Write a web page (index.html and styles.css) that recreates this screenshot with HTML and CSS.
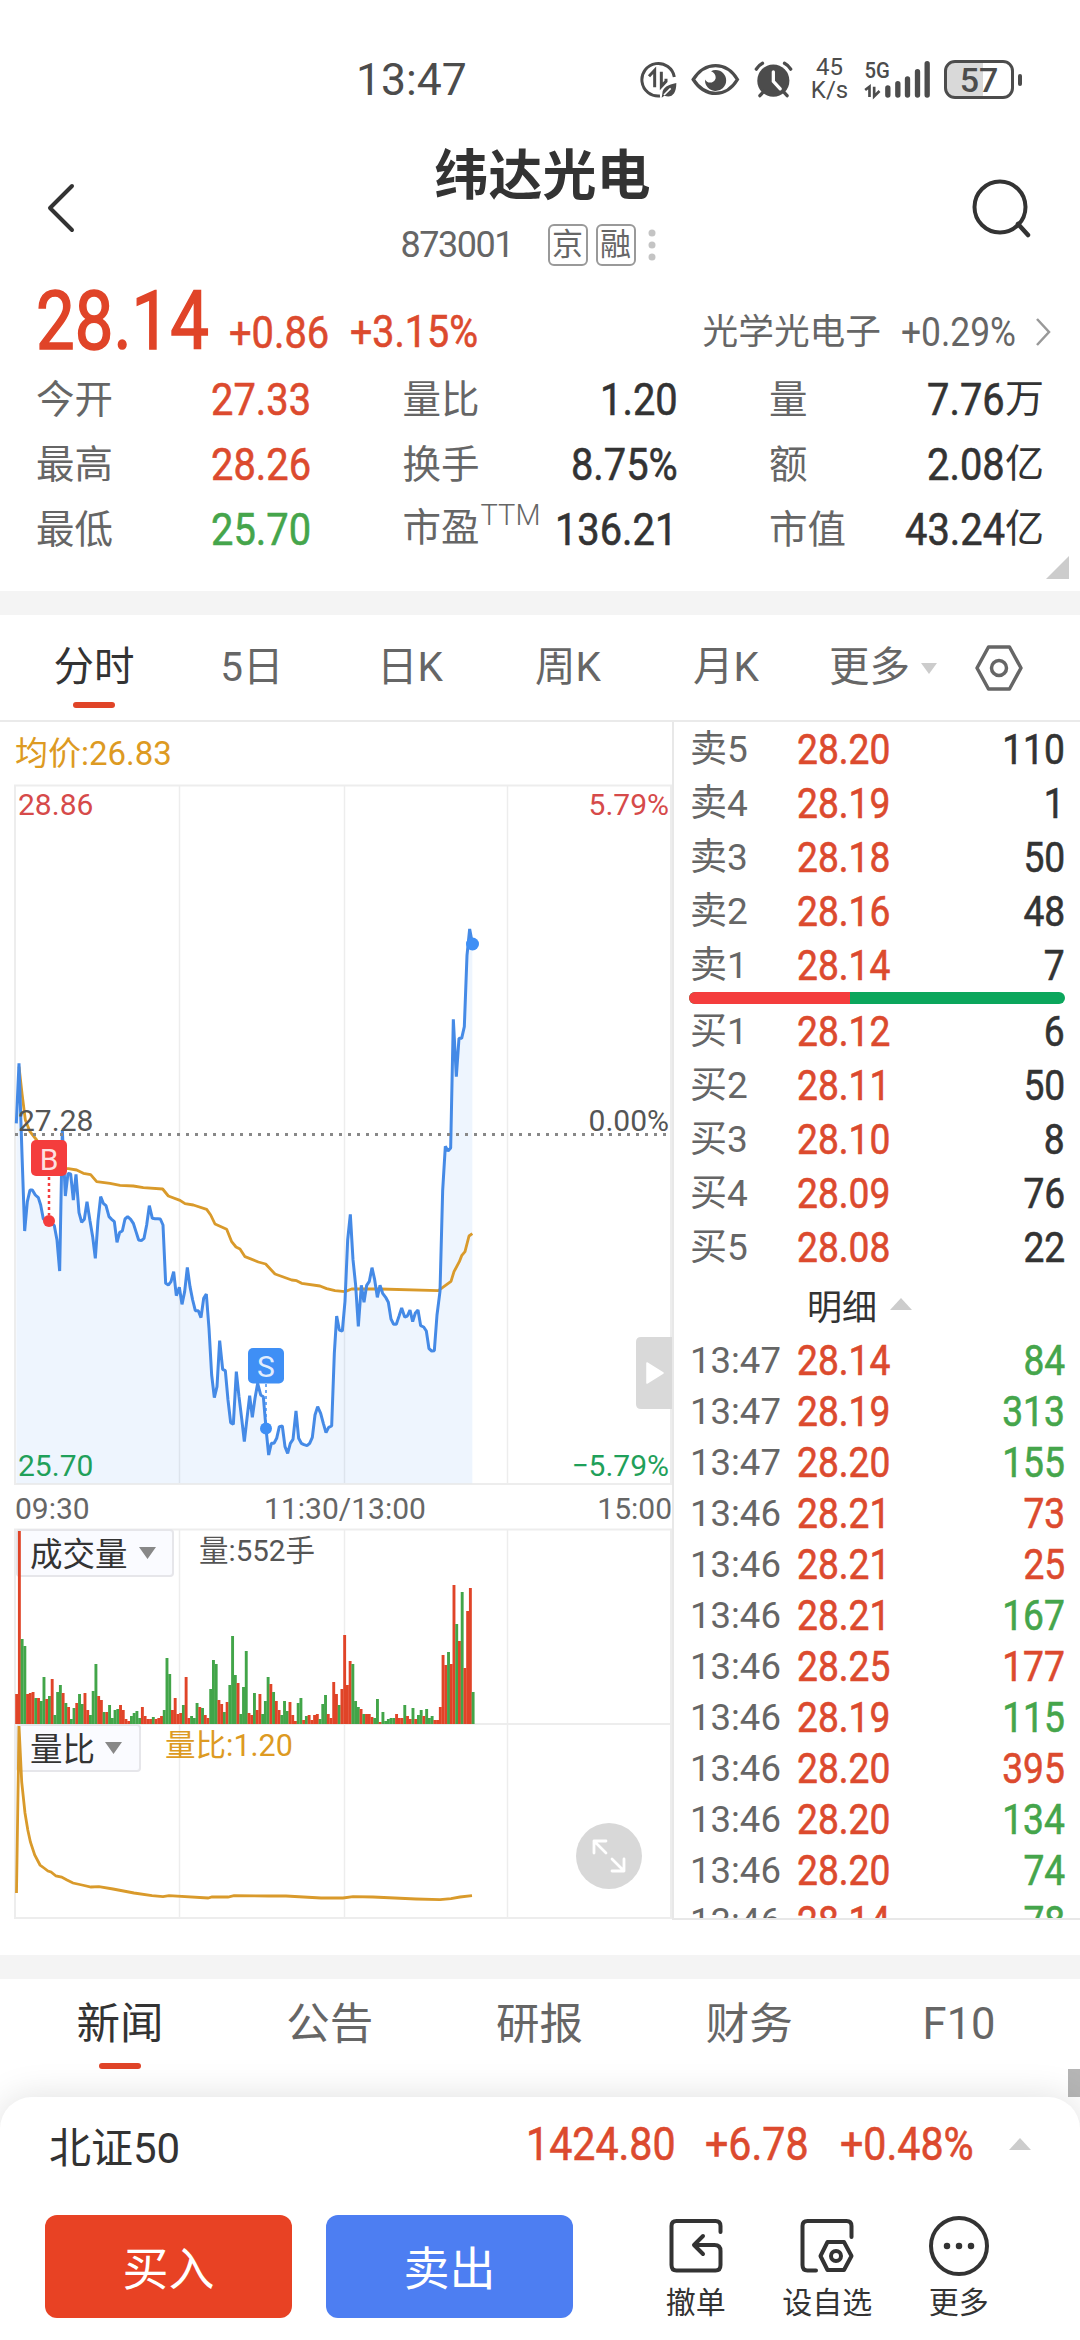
FILE: index.html
```html
<!DOCTYPE html>
<html lang="zh-CN">
<head>
    <meta charset="UTF-8">
    <meta name="viewport" content="width=device-width, initial-scale=1.0">
    <title>纬达光电 873001</title>
    <link rel="stylesheet" href="styles.css">
</head>
<body>

    <div class="status-bar">
        <div class="clock">13:47</div>
        <div class="status-icons">
            <svg class="icon-data" viewBox="28 46 111 111" width="37" height="37">
                <path d="M131 94A49 49 0 1 0 88 151" fill="none" stroke="#4c4c4c" stroke-width="9"/>
                <path d="M55 92L72 74V125M92 78V122L106 107V99" fill="none" stroke="#4c4c4c" stroke-width="9"/>
                <path d="M137 112C112 118 96 124 95 144L93 156L101 150C122 158 137 146 137 112Z" fill="#4c4c4c"/>
                <path d="M100 148L120 128" stroke="#fff" stroke-width="5"/>
            </svg>
            <svg class="icon-eye" viewBox="180 52 147 100" width="49" height="33">
                <path d="M186 102C222 46 286 46 320 102C286 158 222 158 186 102Z" fill="none" stroke="#4c4c4c" stroke-width="10"/>
                <path d="M254 73A32 32 0 1 1 222 102C228 116 250 114 254 98C255 88 248 80 240 77Q246 73 254 73Z" fill="#4c4c4c"/>
            </svg>
            <svg class="icon-alarm" viewBox="368 46 119 111" width="39" height="37">
                <circle cx="427" cy="105" r="49" fill="#4c4c4c"/>
                <path d="M375 70Q382 58 394 52M480 70Q473 58 461 52M386 151L398 138M469 151L457 138" stroke="#4c4c4c" stroke-width="10" stroke-linecap="round" fill="none"/>
                <path d="M427 78V107L448 130" stroke="#fff" stroke-width="10" stroke-linecap="round" fill="none"/>
            </svg>
            <div class="speed"><span>45</span><span>K/s</span></div>
            <svg class="icon-signal" viewBox="698 44 200 114" width="67" height="38">
                <text x="699" y="99" font-size="66" font-weight="500" textLength="76" lengthAdjust="spacingAndGlyphs" fill="#4c4c4c">5G</text>
                <path d="M701 134L714 124V155M728 124V153L744 137" stroke="#4c4c4c" stroke-width="8" fill="none"/>
                <path d="M769 128V149M799 115V149M828 101V149M858 79V149M887 55V149" stroke="#4c4c4c" stroke-width="16" stroke-linecap="round"/>
            </svg>
            <div class="battery"><span>57</span></div>
        </div>
    </div>

    <header class="header">
        <svg class="back" viewBox="0 0 40 60" width="40" height="60">
            <path d="M31 8L9 30L31 52" fill="none" stroke="#333" stroke-width="4" stroke-linecap="round" stroke-linejoin="round"/>
        </svg>
        <div class="title">
            <h1>纬达光电</h1>
            <div class="subtitle">
                <span class="code">873001</span>
                <span class="tag">京</span>
                <span class="tag">融</span>
                <svg viewBox="0 0 8 32" width="8" height="32" fill="#c4c4c4"><circle cx="4" cy="4" r="3.5"/><circle cx="4" cy="16" r="3.5"/><circle cx="4" cy="28" r="3.5"/></svg>
            </div>
        </div>
        <svg class="search" viewBox="0 0 64 64" width="64" height="64">
            <circle cx="30" cy="30" r="25.5" fill="none" stroke="#333" stroke-width="4"/>
            <path d="M48 47L58 58" stroke="#333" stroke-width="4.5" stroke-linecap="round"/>
        </svg>
    </header>

    <section class="quote">
        <div class="quote-top">
            <div class="price"><span class="num">28.14</span></div>
            <div class="change"><span class="num">+0.86</span></div>
            <div class="percent"><span class="num">+3.15%</span></div>
            <div class="sector">光学光电子</div>
            <div class="sector-change"><span class="num">+0.29%</span></div>
            <svg viewBox="0 0 16 32" width="16" height="32"><path d="M2 3L14 16L2 29" fill="none" stroke="#999" stroke-width="2.5"/></svg>
        </div>
        <div class="stats">
            <div class="stat"><label>今开</label><span class="num red">27.33</span></div>
            <div class="stat"><label>量比</label><span class="num">1.20</span></div>
            <div class="stat"><label>量</label><span class="num">7.76</span><i>万</i></div>
            <div class="stat"><label>最高</label><span class="num red">28.26</span></div>
            <div class="stat"><label>换手</label><span class="num">8.75%</span></div>
            <div class="stat"><label>额</label><span class="num">2.08</span><i>亿</i></div>
            <div class="stat"><label>最低</label><span class="num green">25.70</span></div>
            <div class="stat"><label>市盈<small>TTM</small></label><span class="num">136.21</span></div>
            <div class="stat"><label>市值</label><span class="num">43.24</span><i>亿</i></div>
        </div>
        <div class="corner"></div>
    </section>

    <nav class="chart-tabs">
        <a class="active">分时</a>
        <a>5日</a>
        <a>日K</a>
        <a>周K</a>
        <a>月K</a>
        <a class="more">更多<b class="tri-down"></b></a>
        <svg viewBox="0 0 48 48" width="48" height="48" fill="none" stroke="#666" stroke-width="3.5">
            <path d="M13.500 3H34.500L46 24L34.500 45H13.500L2 24Z" stroke-linejoin="round"/>
            <circle cx="24" cy="24" r="7.500"/>
        </svg>
    </nav>

    <main class="board">
        <svg class="chart" viewBox="0 722 672 1198" width="672" height="1198">
            <!-- grid -->
            <g stroke="#ededed" stroke-width="2" fill="none">
                <path d="M15 785.500H671V1484H15ZM15 1529.500H671V1918H15ZM15 1724H671"/>
                <path d="M179.500 786V1484M344.500 786V1484M507.500 786V1484M179.500 1530V1918M344.500 1530V1918M507.500 1530V1918" stroke-width="1.500"/>
            </g>

            <!-- intraday price, drawn in thirds of a pixel -->
            <g transform="translate(0 1030) scale(.33333)" fill="none" stroke-linejoin="bevel">
                <path id="area" fill="#3f8cf0" fill-opacity=".09"/>
                <polyline stroke="#d99a2b" stroke-width="8.500" points="57,110 66,190 76,270 90,305 110,330 147,385 187,416 205,416 230,420 250,430 272,434 290,455 330,460 360,466 400,468 430,473 488,477 505,498 540,511 555,521 580,525 620,538 632,555 645,582 680,598 695,635 708,651 720,657 735,680 775,696 797,702 825,732 875,750 890,752 905,760 960,768 980,776 1005,782 1035,785 1055,777 1140,777 1315,782 1353,754 1362,725 1378,695 1385,677 1395,665 1407,618 1417,611"/>
                <polyline id="price" stroke="#458ae6" stroke-width="9" points="49,280 57,100 66,373 74,603 82,515 90,480 97,480 106,495 115,503 122,525 130,567 147,573 163,587 171,630 179,723 187,300 196,498 204,430 212,432 220,510 228,433 237,548 245,577 253,568 261,515 270,573 278,620 286,685 294,572 302,500 310,520 318,527 327,560 335,568 343,575 351,637 359,607 367,603 375,567 383,560 392,568 400,580 408,605 416,630 424,632 432,625 440,585 448,527 457,565 465,566 473,566 481,567 489,585 497,760 505,765 513,755 521,725 529,797 538,772 546,823 554,785 562,712 570,770 578,810 586,842 595,842 603,863 611,805 619,792 627,895 635,1035 643,1103 651,1070 659,932 668,1018 676,1022 684,1110 692,1178 700,1183 709,1025 717,1100 725,1165 733,1235 741,1165 749,1097 757,1162 765,1105 773,1060 782,1095 790,1100 798,1195 806,1275 814,1240 822,1240 830,1225 838,1190 847,1188 855,1250 863,1270 871,1240 879,1228 888,1143 896,1225 904,1240 912,1244 921,1247 929,1240 937,1222 945,1155 953,1130 962,1150 970,1180 978,1208 986,1192 995,1188 1003,970 1010,858 1018,900 1027,903 1035,814 1043,630 1051,553 1059,689 1067,766 1075,889 1084,766 1092,817 1100,766 1108,754 1116,713 1124,749 1132,802 1140,766 1148,790 1157,802 1165,817 1173,867 1181,883 1189,883 1197,859 1205,834 1214,861 1222,858 1230,840 1238,875 1246,849 1254,840 1262,887 1271,891 1279,903 1287,956 1295,963 1303,962 1311,855 1320,784 1328,482 1336,349 1344,363 1352,354 1360,-32 1369,140 1377,25 1385,25 1393,-10 1401,-224 1409,-303 1417,-260"/>
            </g>
            <circle cx="472.500" cy="944" r="6.500" fill="#3f8ff5"/>
            <path d="M15 1134.500H668" stroke="#888" stroke-width="3" stroke-dasharray="3 6"/>

            <!-- trade markers -->
            <path d="M49 1177V1215" stroke="#f43d3d" stroke-width="2.500" stroke-dasharray="3 3"/>
            <circle cx="49" cy="1221" r="6" fill="#f43d3d"/>
            <rect x="31" y="1140" width="36" height="36" rx="5" fill="#f43d3d"/>
            <path d="M266 1384V1424" stroke="#3f8ff5" stroke-width="1.500" stroke-dasharray="3 3"/>
            <circle cx="266" cy="1428.500" r="6" fill="#3f8ff5"/>
            <rect x="248" y="1348" width="36" height="35.500" rx="5" fill="#3f8ff5"/>
            <g class="marker-text"><text x="49" y="1169.500">B</text><text x="266" y="1377">S</text></g>

            <!-- axis labels -->
            <text x="15" y="765" font-size="33" fill="#dd9a22">均价:26.83</text>
            <g font-size="30">
                <text x="18" y="815" fill="#d64a4a">28.86</text>
                <text x="669" y="815" fill="#d64a4a" text-anchor="end">5.79%</text>
                <text x="18" y="1131" fill="#555">27.28</text>
                <text x="669" y="1131" fill="#555" text-anchor="end">0.00%</text>
                <text x="18" y="1476" fill="#1fa05a">25.70</text>
                <text x="669" y="1476" fill="#1fa05a" text-anchor="end">−5.79%</text>
                <g fill="#666">
                    <text x="15" y="1519">09:30</text>
                    <text x="345" y="1519" text-anchor="middle">11:30/13:00</text>
                    <text x="672" y="1519" text-anchor="end">15:00</text>
                </g>
            </g>

            <!-- indicator pickers -->
            <g fill="#fafbff" stroke="#e6e6ea" stroke-width="2">
                <rect x="17" y="1530" width="156" height="46" rx="3"/>
                <rect x="17" y="1725" width="123" height="46" rx="3"/>
            </g>
            <g font-size="32.500" fill="#333">
                <text x="30" y="1566">成交量</text>
                <text x="30" y="1761">量比</text>
            </g>
            <path d="M139 1547H156L147.500 1559ZM105 1742H122L113.500 1754Z" fill="#888"/>
            <text x="199" y="1561" font-size="29.500" fill="#555">量:552手</text>
            <text x="165" y="1756" font-size="30.500" fill="#dd9a22">量比:1.20</text>

            <g id="volume"></g>
            <polyline fill="none" stroke="#d99a2b" stroke-width="2.800" points="16.500,1893 19,1726 21.700,1782 25,1813 27.800,1830 30.400,1842 34.700,1855 40,1865 44,1868 48,1871 51,1872 56,1876 61.600,1877 67,1880 73,1883 82,1885 91,1887 99,1886.700 113,1889 134,1893 152,1895.700 163,1896.700 169,1895.700 208,1898 212,1897 228,1897 234,1895.700 269,1896 286,1896 321,1898 343,1898 353,1896.700 373,1897 416,1899 440,1899.700 451,1898.700 460,1897 472,1895.700"/>

            <!-- overlay controls -->
            <path d="M672 1337H641Q636 1337 636 1342V1404Q636 1409 641 1409H672Z" fill="#d9d9d9"/>
            <path d="M647 1363L663 1373L647 1383Z" fill="#fff" stroke="#fff" stroke-width="1.500" stroke-linejoin="round"/>
            <circle cx="609" cy="1856" r="33" fill="#d8d8d8"/>
            <path d="M594 1853V1841H606M594 1841L606 1853M624 1859V1871H612M624 1871L612 1859" fill="none" stroke="#fff" stroke-width="2.800" stroke-linecap="round" stroke-linejoin="round"/>
        </svg>

        <div class="depth">
            <div id="sells"></div>
            <div class="ratio-bar"><span></span></div>
            <div id="buys"></div>
            <div class="detail-title">明细<b class="tri-up"></b></div>
            <div id="trades" class="trades"></div>
        </div>
    </main>

    <nav class="info-tabs">
        <a class="active">新闻</a>
        <a>公告</a>
        <a>研报</a>
        <a>财务</a>
        <a>F10</a>
        <div class="scroll-thumb"></div>
    </nav>

    <footer class="sheet">
        <div class="index-row">
            <div class="index-name">北证50</div>
            <div class="index-value"><span class="num">1424.80</span></div>
            <div class="index-change"><span class="num">+6.78</span></div>
            <div class="index-percent"><span class="num">+0.48%</span></div>
            <b class="tri-up"></b>
        </div>
        <div class="actions">
            <button class="buy">买入</button>
            <button class="sell">卖出</button>
            <div class="tools">
                <div class="tool">
                    <svg viewBox="0 0 60 60" width="60" height="60">
                        <path d="M54.500 16V10Q54.500 5 49.500 5H10.500Q5.500 5 5.500 10V49Q5.500 54.500 10.500 54.500H49.500Q54.500 54.500 54.500 49V35Q54.500 29 48.500 29H29M37 20L28 29L37 38"/>
                    </svg>
                    <span>撤单</span>
                </div>
                <div class="tool">
                    <svg viewBox="0 0 60 60" width="60" height="60">
                        <path d="M54.500 21V10Q54.500 5 49.500 5H10.500Q5.500 5 5.500 10V49Q5.500 54.500 10.500 54.500H19"/>
                        <path d="M30.500 26H47L54.500 40L47 54H30.500L23.500 40Z"/>
                        <circle cx="39" cy="40" r="5"/>
                    </svg>
                    <span>设自选</span>
                </div>
                <div class="tool">
                    <svg viewBox="0 0 60 60" width="60" height="60">
                        <circle cx="30" cy="30" r="28"/>
                        <path d="M18 30h.01M30 30h.01M42 30h.01" stroke-width="6.500"/>
                    </svg>
                    <span>更多</span>
                </div>
            </div>
        </div>
    </footer>

    <script>
        const sells = [["卖5", "28.20", 110], ["卖4", "28.19", 1], ["卖3", "28.18", 50], ["卖2", "28.16", 48], ["卖1", "28.14", 7]];
        const buys = [["买1", "28.12", 6], ["买2", "28.11", 50], ["买3", "28.10", 8], ["买4", "28.09", 76], ["买5", "28.08", 22]];

        // time, price, volume, direction
        const trades = [
            ["13:47", "28.14", 84, "green"],
            ["13:47", "28.19", 313, "green"],
            ["13:47", "28.20", 155, "green"],
            ["13:46", "28.21", 73, "red"],
            ["13:46", "28.21", 25, "red"],
            ["13:46", "28.21", 167, "green"],
            ["13:46", "28.25", 177, "red"],
            ["13:46", "28.19", 115, "green"],
            ["13:46", "28.20", 395, "red"],
            ["13:46", "28.20", 134, "green"],
            ["13:46", "28.20", 74, "green"],
            ["13:46", "28.14", 78, "green"],
        ];

        function renderRows(id, rows) {
            document.getElementById(id).innerHTML = rows.map(([label, price, amount, color = ""]) =>
                `<div class="row"><span class="row-label">${label}</span><span class="num red">${price}</span><span class="num amount ${color}">${amount}</span></div>`
            ).join("");
        }

        renderRows("sells", sells);
        renderRows("buys", buys);
        renderRows("trades", trades);

        // Volume per minute, negative means a falling minute
        const volume = [
            30, 193, -85, -78, 30, 31, 32, -26, 26, -23, -47, 25, -28, 45, -9, -32, -39, 31, -21, 17,
            -5, -16, 21, -30, -20, 31, 14, -9, -33, -60, 28, 24, -12, 12, -19, -6, -14, -15, 19, 14,
            5, 3, -8, -11, -13, -6, 17, 8, 5, 5, -7, 5, 6, 8, -14, -66, -50, 14, 26, 10,
            11, -19, 47, 6, -8, -6, -21, 17, -16, 9, 6, -35, -64, -60, 24, 20, -12, 22, -39, -88,
            -49, 41, -10, -37, -73, 11, 9, -31, 14, 30, -10, -23, -47, 40, -32, 23, 14, -9, -23, -13,
            22, 9, 3, -21, -26, 4, -8, 9, 4, 9, 10, -5, -20, -29, 10, 6, 42, 30, -19, 35,
            89, 39, 63, -60, -23, -17, 15, -10, 10, 10, 7, -6, -25, 2, -12, -3, -5, -6, -6, 10,
            6, 6, -19, 8, 5, -16, 5, -9, -14, 8, -15, -6, -8, 4, 4, 17, 69, 59, -72, 60,
            139, -100, 83, -132, 56, 113, 136, -32,
        ];
        const step = 656 / 240;
        document.getElementById("volume").innerHTML = volume.map((v, i) => {
            const h = Math.abs(v);
            return `<rect x="${(15.2 + i * step).toFixed(2)}" y="${1724 - h}" width="2.9" height="${h}" fill="${v > 0 ? "#e04428" : "#42a549"}"/>`;
        }).join("");

        // Fill below the price line
        const line = document.getElementById("price").getAttribute("points");
        document.getElementById("area").setAttribute("d", `M49,1360 L${line} L1417,1360Z`);
    </script>

</body>
</html>
```

FILE: styles.css
```css
* {
    box-sizing: border-box;
}

body {
    margin: 0;
    width: 1080px;
    height: 2340px;
    overflow: hidden;
    background: #fff;
    color: #333;
    font-family: Roboto, "Noto Sans CJK SC", sans-serif;
    display: flex;
    flex-direction: column;
}

svg {
    display: block;
    flex: none;
}

/* Narrow figures */
.num {
    display: inline-block;
    -webkit-text-stroke: .6px currentColor;
    transform: scaleX(.885);
    transform-origin: left center;
    white-space: nowrap;
}

.red {
    color: #dc4a2e;
}

.green {
    color: #45a54b;
}

.tri-up,
.tri-down {
    display: inline-block;
    border: 11px solid transparent;
}

.tri-up {
    border-top: 0;
    border-bottom: 12px solid #ccc;
}

.tri-down {
    border-width: 11px 8px 0;
    border-top-color: #ccc;
}

/* Status bar */
.status-bar {
    flex: none;
    height: 128px;
    padding: 30px 57px 0 356px;
    display: flex;
    justify-content: space-between;
    align-items: center;
    color: #4c4c4c;
}

.clock {
    padding-top: 2px;
    font-size: 44.5px;
}

.status-icons {
    display: flex;
    align-items: center;
}

.icon-eye,
.icon-alarm {
    margin-left: 14px;
}

.speed {
    width: 37px;
    margin-left: 18px;
    display: flex;
    flex-direction: column;
    align-items: center;
    font-size: 24px;
    line-height: 23px;
}

.icon-signal {
    margin-left: 16px;
    overflow: visible;
}

.battery {
    position: relative;
    width: 70px;
    height: 39px;
    margin: 0 9px 0 13px;
    border: 3px solid #4c4c4c;
    border-radius: 11px;
    background: linear-gradient(90deg, #d9d9d9 57%, #fff 57%);
    text-align: center;
    font-size: 34px;
    font-weight: 500;
    line-height: 34px;
}

.battery::after {
    content: "";
    position: absolute;
    right: -11px;
    top: 11px;
    width: 4px;
    height: 12px;
    border-radius: 2px;
    background: #4c4c4c;
}

/* Header */
.header {
    flex: none;
    height: 152px;
    padding: 0 46px 0 41px;
    display: flex;
    justify-content: space-between;
}

.back {
    margin-top: 50px;
}

.search {
    margin-top: 49px;
}

.title {
    padding-top: 19px;
    width: 280px;
    margin-left: 30px;
}

h1 {
    margin: 0;
    font-size: 54px;
    line-height: 60px;
    font-weight: 700;
    text-align: center;
    width: 284px;
}

.subtitle {
    display: flex;
    align-items: center;
    height: 44px;
    margin-top: 16px;
}

.code {
    width: 147px;
    font-size: 36px;
    letter-spacing: -1.5px;
    color: #666;
}

.tag {
    width: 40px;
    height: 42px;
    margin-right: 8px;
    border: 2px solid #999;
    border-radius: 6px;
    font-size: 31px;
    line-height: 37px;
    text-align: center;
    color: #666;
}

.subtitle svg {
    margin-left: 4px;
}

/* Quote */
.quote {
    position: relative;
    flex: none;
    height: 311px;
    padding: 0 36px;
}

.quote-top {
    display: flex;
    height: 90px;
    color: #666;
    line-height: 105px;
}

.price {
    width: 193px;
    font-size: 81px;
    line-height: 83px;
    color: #e04428;
}

.price .num {
    -webkit-text-stroke-width: 1.6px;
    transform: scaleX(.85);
}

.change {
    width: 121px;
    font-size: 45px;
    color: #dc4a2e;
}

.percent {
    width: 130px;
    font-size: 44.5px;
    color: #dc4a2e;
}

.sector {
    margin-left: auto;
    font-size: 35.7px;
}

.sector-change {
    width: 134px;
    margin-left: 20px;
    font-size: 40px;
}

.sector-change .num {
    -webkit-text-stroke-width: 0;
}

.quote-top svg {
    margin: 36px -7px 0 0;
}

.stats {
    display: grid;
    grid-template-columns: repeat(3, 275px);
    grid-auto-rows: 65px;
    column-gap: 91.5px;
    margin-top: -3px;
}

.stat {
    display: flex;
    align-items: center;
    font-size: 45px;
    line-height: 65px;
}

.stat label {
    margin-right: auto;
    font-size: 38.5px;
    color: #666;
    white-space: nowrap;
}

.stat .num {
    transform-origin: right center;
}

.stat i {
    font-style: normal;
    font-size: 39px;
}

.stat small {
    font-size: 29px;
    font-weight: 300;
    position: relative;
    top: -16px;
    left: 1px;
}

.corner {
    position: absolute;
    right: 11px;
    bottom: 12px;
    border-left: 23px solid transparent;
    border-bottom: 23px solid #ccc;
}

/* Chart tabs */
.chart-tabs {
    flex: none;
    height: 131px;
    padding-left: 15px;
    border-top: 24px solid #f4f4f4;
    border-bottom: 2px solid #eaeaea;
    display: flex;
    align-items: center;
    font-size: 40.5px;
    color: #666;
}

.chart-tabs a {
    position: relative;
    width: 158px;
    text-align: center;
    line-height: 107px;
}

.chart-tabs .more {
    width: 170px;
    text-align: left;
    padding-left: 24px;
    white-space: nowrap;
}

.more .tri-down {
    margin: 0 0 7px 11px;
}

.active {
    color: #333;
}

.active::after {
    content: "";
    position: absolute;
    left: 50%;
    bottom: 13px;
    width: 42px;
    height: 6px;
    margin-left: -21px;
    border-radius: 3px;
    background: #e04428;
}

/* Chart and order book */
.board {
    flex: none;
    display: flex;
    height: 1198px;
}

.chart text {
    font-family: Roboto, "Noto Sans CJK SC", sans-serif;
}

.marker-text {
    font-size: 30px;
    text-anchor: middle;
    fill: #fff;
    fill-opacity: .85;
}

.depth {
    width: 408px;
    height: 1198px;
    padding: 0 15px;
    border-left: 2px solid #e8e8e8;
    border-bottom: 2px solid #e8e8e8;
    overflow: hidden;
}

.row {
    display: flex;
    align-items: center;
    height: 54px;
    padding: 1px 0 0 1px;
    font-size: 42px;
    line-height: 54px;
}

.row-label {
    width: 107px;
    font-size: 37px;
    color: #666;
}

.row .amount {
    margin-left: auto;
    transform-origin: right center;
}

.ratio-bar {
    height: 12px;
    border-radius: 6px;
    background: #0ba65c;
    overflow: hidden;
}

.ratio-bar span {
    display: block;
    width: 161px;
    height: 12px;
    background: #f43d3d;
}

.detail-title {
    display: flex;
    align-items: center;
    height: 60px;
    padding-left: 118px;
    font-size: 35px;
}

.detail-title .tri-up {
    margin-left: 13px;
}

.trades .row {
    height: 51px;
    line-height: 51px;
}

.trades .row-label {
    font-size: 36.5px;
}

/* Info tabs */
.info-tabs {
    position: relative;
    flex: none;
    height: 142px;
    margin-top: 35px;
    padding: 0 16px 0 15px;
    border-top: 24px solid #f4f4f4;
    display: flex;
    font-size: 43.5px;
    color: #666;
}

.info-tabs a {
    position: relative;
    width: 210px;
    height: 103px;
    line-height: 92px;
    text-align: center;
}

.scroll-thumb {
    position: absolute;
    right: 0;
    bottom: 0;
    width: 12px;
    height: 28px;
    background: #b5b5b5;
}

/* Bottom sheet */
.sheet {
    position: relative;
    flex: 1;
    border-radius: 32px 32px 0 0;
    background: #fff;
    box-shadow: 0 0 36px rgba(0, 0, 0, .13);
}

.index-row {
    display: flex;
    align-items: center;
    height: 96px;
    padding: 0 49px 2px;
    font-size: 46.5px;
    color: #dc4a2e;
}

.index-name {
    width: 477px;
    font-size: 42px;
    color: #333;
}

.index-value {
    width: 180px;
}

.index-change {
    width: 135px;
}

.index-percent {
    width: 169px;
}

.index-row .num {
    transform: scaleX(.885);
}

.actions {
    display: flex;
    padding: 22px 45px 0;
}

.actions button {
    width: 247px;
    height: 103px;
    margin: 0 34px 0 0;
    padding: 0 0 4px;
    border: none;
    border-radius: 12px;
    font-family: inherit;
    font-size: 46px;
    color: #fff;
}

.buy {
    background: #e84224;
}

.sell {
    background: #4d7ef2;
}

.tools {
    display: flex;
    margin-left: 23px;
}

.tool {
    width: 131.5px;
    display: flex;
    flex-direction: column;
    align-items: center;
    font-size: 30px;
    line-height: 44px;
}

.tool svg {
    margin: 1px 0 5px;
    fill: none;
    stroke: #333;
    stroke-width: 4;
    stroke-linecap: round;
    stroke-linejoin: round;
}
```
